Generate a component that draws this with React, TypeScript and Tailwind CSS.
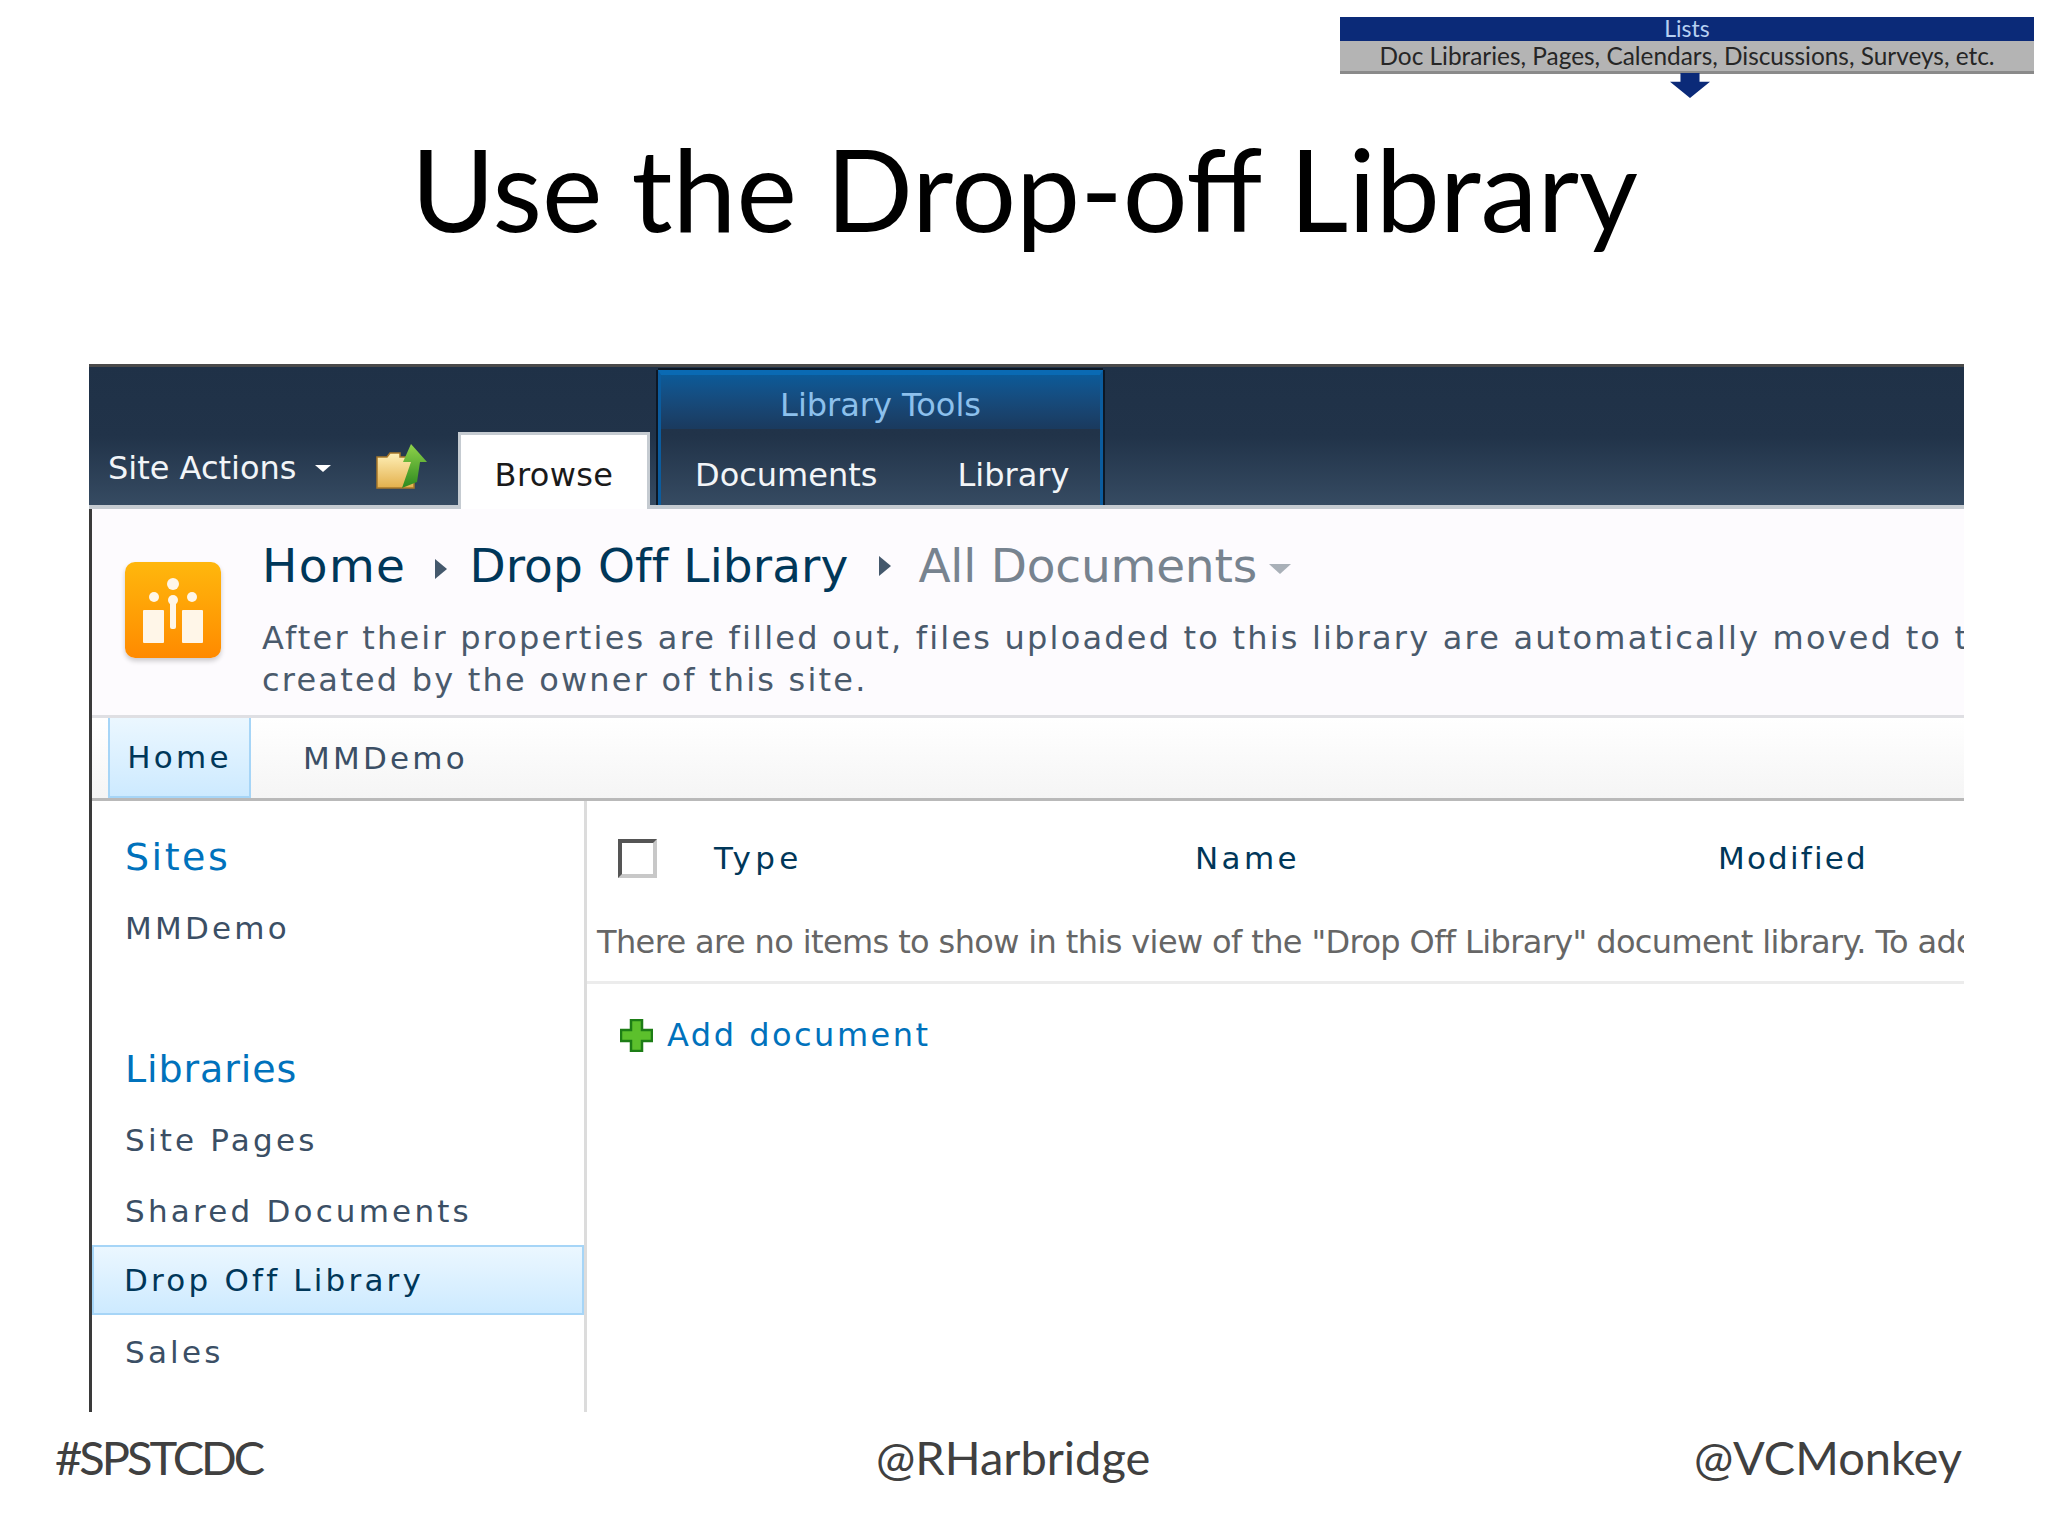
const sp = "font-['DejaVu_Sans',sans-serif]";

function FolderUpIcon() {
  return (
    <svg width="52" height="46" viewBox="0 0 52 46" className="mb-[-4px]">
      <defs>
        <linearGradient id="folder" x1="0" y1="0" x2="0" y2="1">
          <stop offset="0" stopColor="#fff0b8" />
          <stop offset="1" stopColor="#e3b04c" />
        </linearGradient>
        <linearGradient id="upArrow" x1="0" y1="0" x2="0" y2="1">
          <stop offset="0" stopColor="#8fd24a" />
          <stop offset="1" stopColor="#2d8a1f" />
        </linearGradient>
      </defs>
      <path d="M1 13h10l3-4h10v4h14v31H1z" fill="url(#folder)" stroke="#a8782a" strokeWidth="1.5" />
      <path d="M35 0l16 18h-7l-3 20-15 6 9-26h-8z" fill="url(#upArrow)" />
    </svg>
  );
}

function SiteTile() {
  return (
    <div className="flex h-[96px] w-[96px] flex-col items-center justify-center rounded-[10px] bg-gradient-to-b from-[#ffb70d] to-[#ff8a00] shadow-[0_3px_5px_rgba(0,0,0,0.2)]">
      <svg width="60" height="66" viewBox="0 0 60 66" fill="#fff6e8">
        <circle cx="30" cy="7" r="6" />
        <circle cx="11" cy="20" r="5" />
        <circle cx="49" cy="20" r="5" />
        <circle cx="30" cy="23" r="5" />
        <rect x="27" y="24" width="6" height="28" rx="2" />
        <rect x="0" y="33" width="21" height="33" rx="1" />
        <rect x="39" y="33" width="21" height="33" rx="1" />
      </svg>
    </div>
  );
}

function PlusIcon() {
  return (
    <svg width="33" height="33" viewBox="0 0 33 33">
      <path d="M11 1h11v10h10v11H22v10H11V22H1V11h10z" fill="#5cc02c" stroke="#1d7d16" strokeWidth="2.5" />
    </svg>
  );
}

function SideLink({ label, active }: { label: string; active?: boolean }) {
  return (
    <div
      className={`flex items-center whitespace-nowrap text-[31px] tracking-[3.2px] ${
        active
          ? "h-[70px] border-[2px] border-[#a6d5f7] bg-gradient-to-b from-[#ebf7ff] to-[#cdeaff] pl-[30px] text-[#003759]"
          : "h-[68px] pl-[33px] text-[#3b4f65]"
      }`}
    >
      {label}
    </div>
  );
}

export default function App() {
  return (
    <div className="flex h-[1536px] w-[2048px] flex-col overflow-hidden bg-white">
      {/* little nav strip, top right */}
      <div className="ml-[1340px] mt-[17px] flex w-[694px] flex-col items-center font-['Lato',sans-serif]">
        <div className="flex h-[24px] w-full items-center justify-center bg-[#0b2a78] pb-[2px] text-[23px] text-[#b6d0f2]">Lists</div>
        <div className="flex h-[33px] w-full items-center justify-center whitespace-nowrap border-b-[3px] border-[#8a8a8a] bg-[#b4b4b4] text-[24.4px] text-[#262626]">
          Doc Libraries, Pages, Calendars, Discussions, Surveys, etc.
        </div>
        <svg width="40" height="25" viewBox="0 0 42 26" className="ml-[6px] -mt-[1px]">
          <path d="M11 0h20v9h11L21 26 0 9h11z" fill="#0b2a78" />
        </svg>
      </div>

      <h1 className="mt-[15px] h-[251px] pl-[411px] font-['Lato',sans-serif] text-[114.4px] leading-[150px] text-black">
        Use the Drop-off Library
      </h1>

      {/* SharePoint screenshot */}
      <div className={`ml-[89px] flex h-[1048px] w-[1875px] flex-col overflow-hidden ${sp}`}>
        <div className="flex h-[145px] items-stretch border-b-[4px] border-t-[3px] border-b-[#c5cbd1] border-t-[#4a4a4a] bg-gradient-to-b from-[#1f3147] via-[#213349] to-[#364b62]">
          <div className="flex w-[369px] items-end justify-between pb-[19px] pl-[19px] pr-[30px]">
            <div className="mb-[-3px] flex items-center gap-[18px] text-[32px] leading-[42px] text-[#f2f5f8]">
              Site Actions
              <span className="h-0 w-0 border-x-[8px] border-t-[7px] border-x-transparent border-t-white" />
            </div>
            <FolderUpIcon />
          </div>
          <div className="mb-[-4px] mt-[65px] flex w-[192px] items-center justify-center border-x-[3px] border-b-0 border-t-[3px] border-[#c5cbd1] bg-white pt-[6px] text-[32px] tracking-[0.4px] text-[#1a1a1a]">
            Browse
          </div>
          <div className="ml-[8px] mt-[3px] flex w-[445px] flex-col border-x-[3px] border-t-[5px] border-x-[#0b5c9e] border-t-[#0a6ab3] shadow-[0_-2px_0_#0c1826,2px_0_0_#0c1826,-2px_0_0_#0c1826]">
            <div className="flex h-[54px] items-center justify-center bg-gradient-to-b from-[#0b5a98] to-[#1a3a5e] pt-[5px] text-[32px] text-[#8cc0ec]">
              Library Tools
            </div>
            <div className="flex flex-1 items-center gap-[80px] pl-[34px] pt-[16px] text-[32px] text-[#f2f5f8]">
              <span>Documents</span>
              <span>Library</span>
            </div>
          </div>
        </div>

        <div className="flex flex-1 flex-col border-l-[3px] border-[#3a3a3a]">
          <div className="flex h-[209px] border-b-[3px] border-[#dfdfe3] bg-[#fdfbfe]">
            <div className="pl-[33px] pt-[53px]">
              <SiteTile />
            </div>
            <div className="pl-[41px] pt-[27px]">
              <div className="flex h-[60px] items-center whitespace-nowrap text-[47px] text-[#003759]">
                <span className="tracking-[1.4px]">Home</span>
                <span className="ml-[29px] mr-[22px] mt-[6px] h-0 w-0 border-y-[10px] border-l-[12px] border-y-transparent border-l-[#44586c]" />
                <span className="tracking-[0.1px]">Drop Off Library</span>
                <span className="ml-[31px] mr-[27px] h-0 w-0 border-y-[10px] border-l-[12px] border-y-transparent border-l-[#44586c]" />
                <span className="tracking-[-0.2px] text-[#77838f]">All Documents</span>
                <span className="ml-[12px] mt-[6px] h-0 w-0 border-x-[11px] border-t-[10px] border-x-transparent border-t-[#a9b0b8]" />
              </div>
              <div className="mt-[21px] whitespace-nowrap text-[32px] leading-[42px] tracking-[2.2px] text-[#4a5a6c]">
                After their properties are filled out, files uploaded to this library are automatically moved to the
                <br />
                created by the owner of this site.
              </div>
            </div>
          </div>

          <div className="flex h-[83px] items-stretch border-b-[3px] border-[#b9b9b9] bg-gradient-to-b from-[#ffffff] to-[#f5f5f5] pl-[16px] text-[31px] tracking-[3.2px]">
            <div className="flex w-[143px] items-center justify-center border-x-[2px] border-b-[2px] border-[#a6d5f7] bg-gradient-to-b from-[#ebf7ff] to-[#cdeaff] text-[#003759]">
              Home
            </div>
            <div className="flex items-center pl-[52px] text-[#3b4f65]">MMDemo</div>
          </div>

          <div className="flex flex-1">
            <div className="w-[495px] shrink-0 border-r-[3px] border-[#dcdcdc] pt-[27px]">
              <div className="h-[58px] pl-[33px] text-[38px] leading-[58px] tracking-[2.5px] text-[#0072bc]">Sites</div>
              <div className="mt-[8px]">
                <SideLink label="MMDemo" />
              </div>
              <div className="mt-[76px] h-[62px] pl-[33px] text-[38px] leading-[62px] tracking-[0.9px] text-[#0072bc]">Libraries</div>
              <div className="mt-[6px]">
                <SideLink label="Site Pages" />
                <div className="mt-[3px]">
                  <SideLink label="Shared Documents" />
                </div>
                <SideLink label="Drop Off Library" active />
                <div className="mt-[3px]">
                  <SideLink label="Sales" />
                </div>
              </div>
            </div>

            <div className="min-w-0 flex-1">
              <div className="h-[183px] border-b-[3px] border-[#ececec]">
                <div className="flex items-center pl-[31px] pt-[34px] text-[31px] text-[#003759]">
                  <span className="h-[39px] w-[39px] border-[4px] border-b-[#c8c8c8] border-l-[#555] border-r-[#c8c8c8] border-t-[#555] bg-white" />
                  <span className="ml-[57px] w-[481px] tracking-[4.4px]">Type</span>
                  <span className="w-[523px] tracking-[3.4px]">Name</span>
                  <span className="tracking-[2.2px]">Modified</span>
                </div>
                <div className="mt-[36px] overflow-hidden whitespace-nowrap pl-[10px] text-[32px] tracking-[-0.62px] text-[#666666]">
                  There are no items to show in this view of the "Drop Off Library" document library. To add a new item
                </div>
              </div>
              <div className="flex items-center gap-[14px] pl-[33px] pt-[27px] text-[32px] tracking-[2.5px] text-[#0072bc]">
                <PlusIcon />
                Add document
              </div>
            </div>
          </div>
        </div>
      </div>

      <div className="flex items-center pl-[55px] pr-[86px] pt-[15px] font-['Lato',sans-serif] text-[47px] leading-[60px] text-[#404040]">
        <span className="w-[821px] tracking-[-3px]">#SPSTCDC</span>
        <span>@RHarbridge</span>
        <span className="ml-auto">@VCMonkey</span>
      </div>
    </div>
  );
}
